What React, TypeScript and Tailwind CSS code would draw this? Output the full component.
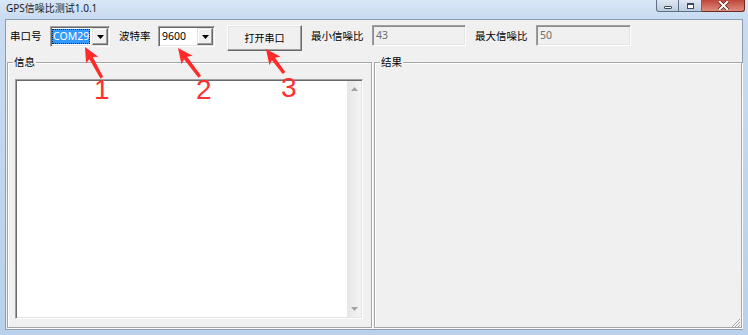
import type { ReactNode } from "react";

const uiFont = "font-['Noto_Sans','Noto_Sans_CJK_SC',sans-serif]";

export default function App() {
  return (
    <div
      className={`relative h-[335px] w-[748px] overflow-hidden bg-gradient-to-b from-[#cadcf1] to-[#b9d1eb] text-[10.5px] text-black ${uiFont}`}
    >
      <TitleBar />

      <div className="relative mx-[5px] h-[311px] border border-[#8d9cae] bg-[#f0f0f0]">
        <div className="flex items-start pl-[4px] pt-[5px]">
          <FieldLabel className="w-[40px]">串口号</FieldLabel>
          <ComboBox value="COM29" selected className="w-[60px]" />
          <FieldLabel className="ml-[9px] w-[39px]">波特率</FieldLabel>
          <ComboBox value="9600" className="w-[57px]" />
          <button
            type="button"
            className="ml-[12px] h-[26px] w-[75px] border border-t-white border-l-white border-r-[#696969] border-b-[#696969] bg-[#f0f0f0] text-[10px] shadow-[inset_-1px_-1px_0_#a0a0a0,inset_1px_1px_0_#e3e3e3]"
          >
            打开串口
          </button>
          <FieldLabel className="ml-[9px] w-[61px]">最小信噪比</FieldLabel>
          <ReadOnlyBox value="43" className="w-[94px]" />
          <FieldLabel className="ml-[9px] w-[61px]">最大信噪比</FieldLabel>
          <ReadOnlyBox value="50" className="w-[95px]" />
        </div>

        <div className="mt-[3px] flex gap-[2px] pl-[1px]">
          <GroupBox title="信息" className="h-[274px] w-[365px]">
            <div className="ml-[7px] mt-[16px] flex h-[240px] w-[348px] border border-t-[#a0a0a0] border-l-[#a0a0a0] border-r-white border-b-white bg-white p-[1px] shadow-[inset_1px_1px_0_#696969,inset_-1px_-1px_0_#e3e3e3]">
              <div className="flex-1" />
              <ScrollBar />
            </div>
          </GroupBox>
          <GroupBox title="结果" className="h-[274px] w-[368px]" />
        </div>

        <svg className="absolute bottom-[1px] right-[1px]" width="11" height="11" viewBox="0 0 11 11" aria-hidden="true">
          <path d="M10 2 L2 10 M10 5 L5 10 M10 8 L8 10" stroke="#a0a0a0" strokeWidth="1" />
          <path d="M10 3 L3 10 M10 6 L6 10 M10 9 L9 10" stroke="#ffffff" strokeWidth="1" />
        </svg>
      </div>

      <Annotations />
    </div>
  );
}

function TitleBar() {
  return (
    <div className="flex h-[19px] items-start justify-between bg-gradient-to-b from-[#d9e7f6] to-[#c8dbf1]">
      <p className="pl-[6px] pt-[1px] text-[10px] leading-[14px] text-[#1b1b1b]">GPS信噪比测试1.0.1</p>
      <div className="mr-[3px] flex h-[12px]">
        <div className="flex h-full w-[23px] items-end justify-center rounded-bl-[3px] border border-t-0 border-[#5b6f86] bg-gradient-to-b from-[#dfe8f3] to-[#bccbdd] pb-[2px]">
          <span className="h-[3px] w-[8px] rounded-[1px] border border-[#3a4a5c] bg-white" />
        </div>
        <div className="flex h-full w-[23px] items-end justify-center border-b border-r border-[#5b6f86] bg-gradient-to-b from-[#dfe8f3] to-[#bccbdd] pb-[2px]">
          <span className="h-[6px] w-[7px] border border-[#3a4a5c] bg-white shadow-[inset_0_1px_0_#3a4a5c]" />
        </div>
        <div className="flex h-full w-[43px] items-end justify-center rounded-br-[3px] border-b border-r border-[#6b2a22] bg-gradient-to-b from-[#c0443a] to-[#dc8a7c] pb-[1px]">
          <svg width="11" height="9" viewBox="0 0 11 9" aria-hidden="true">
            <path d="M1 0 L10 9 M10 0 L1 9" stroke="#4a1a14" strokeWidth="3.4" />
            <path d="M1 0 L10 9 M10 0 L1 9" stroke="#ffffff" strokeWidth="2" />
          </svg>
        </div>
      </div>
    </div>
  );
}

function FieldLabel({ className, children }: { className: string; children: ReactNode }) {
  return <span className={`mt-[1px] h-[21px] whitespace-nowrap leading-[21px] ${className}`}>{children}</span>;
}

function ComboBox({ value, selected, className }: { value: string; selected?: boolean; className: string }) {
  return (
    <div
      className={`mt-[1px] flex h-[21px] border border-t-[#a0a0a0] border-l-[#a0a0a0] border-r-white border-b-white bg-white p-[1px] shadow-[inset_1px_1px_0_#696969,inset_-1px_-1px_0_#e3e3e3] ${className}`}
    >
      <div className="flex min-w-0 flex-1 items-center py-[1px]">
        {selected ? (
          <span className="flex h-full items-center bg-[#3399ff] px-[1px] leading-[15px] text-white outline-1 outline-dotted outline-offset-[-1px] outline-[#1b1b1b]">
            {value}
          </span>
        ) : (
          <span className="pl-[2px] leading-[15px]">{value}</span>
        )}
      </div>
      <div className="flex h-full w-[16px] items-center justify-center border border-t-[#e3e3e3] border-l-[#e3e3e3] border-r-[#696969] border-b-[#696969] bg-[#f0f0f0] shadow-[inset_-1px_-1px_0_#a0a0a0,inset_1px_1px_0_#ffffff]">
        <svg width="7" height="4" viewBox="0 0 7 4" aria-hidden="true">
          <path d="M0 0 H7 L3.5 4 Z" fill="#000000" />
        </svg>
      </div>
    </div>
  );
}

function ReadOnlyBox({ value, className }: { value: string; className: string }) {
  return (
    <div
      className={`h-[21px] border border-t-[#a0a0a0] border-l-[#a0a0a0] border-r-white border-b-white bg-[#f0f0f0] pl-[3px] leading-[19px] text-[#6d6d6d] shadow-[inset_1px_1px_0_#8a8a8a,inset_-1px_-1px_0_#e3e3e3] ${className}`}
    >
      {value}
    </div>
  );
}

function GroupBox({ title, className, children }: { title: string; className: string; children?: ReactNode }) {
  return (
    <div className={`relative pt-[8px] ${className}`}>
      <div className="h-full border border-[#a6a6a6] shadow-[1px_1px_0_#ffffff,inset_1px_1px_0_#ffffff]">{children}</div>
      <span className="absolute left-[6px] top-0 bg-[#f0f0f0] px-[1px] leading-[16px]">{title}</span>
    </div>
  );
}

function ScrollBar() {
  return (
    <div className="flex w-[14px] flex-col items-center justify-between bg-gradient-to-r from-[#e6e6e6] to-[#f4f4f4] py-[6px]">
      <svg width="7" height="4" viewBox="0 0 7 4" aria-hidden="true">
        <path d="M0 4 H7 L3.5 0 Z" fill="#a3a3a3" />
      </svg>
      <svg width="7" height="4" viewBox="0 0 7 4" aria-hidden="true">
        <path d="M0 0 H7 L3.5 4 Z" fill="#a3a3a3" />
      </svg>
    </div>
  );
}

const arrows = [
  { x: 85, y: 47, angle: -28.7, length: 35 },
  { x: 178, y: 48, angle: -37.2, length: 36 },
  { x: 266, y: 49, angle: -36.9, length: 30 },
];

const markers = [
  { label: "1", className: "left-[94px] top-[76px]" },
  { label: "2", className: "left-[196px] top-[76px]" },
  { label: "3", className: "left-[281px] top-[74px]" },
];

function Annotations() {
  return (
    <>
      <svg className="pointer-events-none absolute inset-0" width="748" height="335" aria-hidden="true">
        {arrows.map((a) => (
          <polygon
            key={a.x}
            transform={`translate(${a.x} ${a.y}) rotate(${a.angle})`}
            points={`0,0 7,15 2,12.5 1.6,${a.length} -1.6,${a.length} -2,12.5 -7,15`}
            fill="#ff2a2a"
          />
        ))}
      </svg>
      {markers.map((m) => (
        <span
          key={m.label}
          className={`pointer-events-none absolute text-[28px] leading-[28px] text-[#ff3030] font-['Liberation_Sans',sans-serif] ${m.className}`}
        >
          {m.label}
        </span>
      ))}
    </>
  );
}
